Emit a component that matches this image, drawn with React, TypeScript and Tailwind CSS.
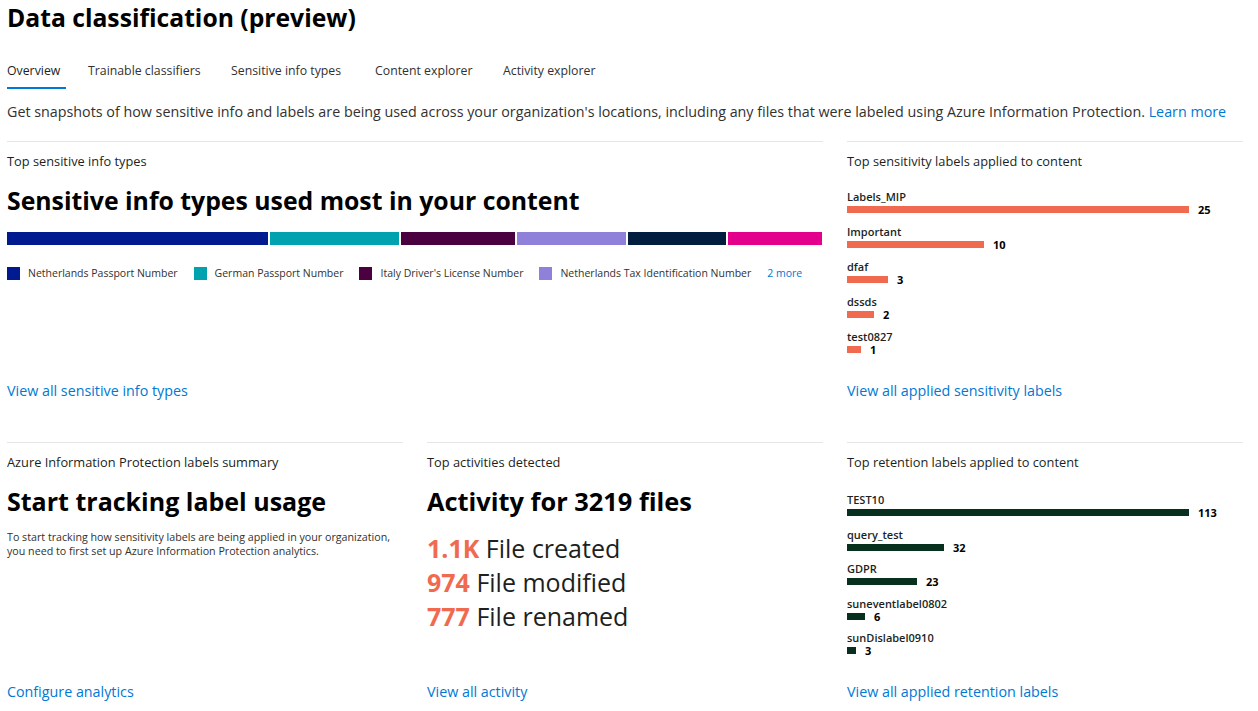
import React from 'react';

const segments = [
  { color: '#001a8f', width: 261 },
  { color: '#00a2b0', width: 129 },
  { color: '#4b003f', width: 114 },
  { color: '#8f80d9', width: 109 },
  { color: '#011e3f', width: 98 },
  { color: '#e3008c', width: 94 },
];

const legend = [
  { color: '#001a8f', label: 'Netherlands Passport Number' },
  { color: '#00a2b0', label: 'German Passport Number' },
  { color: '#4b003f', label: "Italy Driver's License Number" },
  { color: '#8f80d9', label: 'Netherlands Tax Identification Number' },
];

const sensitivityLabels = [
  { name: 'Labels_MIP', value: 25 },
  { name: 'Important', value: 10 },
  { name: 'dfaf', value: 3 },
  { name: 'dssds', value: 2 },
  { name: 'test0827', value: 1 },
];

const retentionLabels = [
  { name: 'TEST10', value: 113 },
  { name: 'query_test', value: 32 },
  { name: 'GDPR', value: 23 },
  { name: 'suneventlabel0802', value: 6 },
  { name: 'sunDislabel0910', value: 3 },
];

const tabs = [
  { label: 'Overview', w: 'w-[81px]' },
  { label: 'Trainable classifiers', w: 'w-[143px]' },
  { label: 'Sensitive info types', w: 'w-[144px]' },
  { label: 'Content explorer', w: 'w-[128px]' },
  { label: 'Activity explorer', w: 'w-[120px]' },
];

function BarList({ items, color, className }: { items: { name: string; value: number }[]; color: string; className: string }) {
  const max = Math.max(...items.map((i) => i.value));
  return (
    <div className={`flex flex-col ${className}`}>
      {items.map((item) => (
        <div key={item.name}>
          <div className="text-[11px] leading-[15px] font-semibold text-[#201f1e]">{item.name}</div>
          <div className="flex h-[11px] items-center">
            <div className="h-[7px]" style={{ width: Math.round((342 * item.value) / max), backgroundColor: color }} />
            <span className="ml-[9px] text-[11px] leading-[11px] font-bold text-black">{item.value}</span>
          </div>
        </div>
      ))}
    </div>
  );
}

function Section({ label, children, link, className = '' }: { label: string; children: React.ReactNode; link: string; className?: string }) {
  return (
    <section className={`flex flex-col border-t border-[#e6e6e6] pt-[10px] ${className}`}>
      <div className="text-[12.8px] leading-[18px] text-[#201f1e]">{label}</div>
      {children}
      <a className="mt-auto text-[14.3px] leading-[20px] text-[#0078d4] cursor-pointer">{link}</a>
    </section>
  );
}

export default function App() {
  return (
    <div className="w-[1258px] min-h-[711px] bg-white pl-[7px] pr-[15px] font-['Open_Sans',sans-serif] text-[#323130]">
      <h1 className="text-[24.7px] leading-[36px] font-bold text-black">Data classification (preview)</h1>

      <nav className="mt-[25px] flex">
        {tabs.map((t, i) => (
          <div key={t.label} className={`flex ${t.w}`}>
            <span
              className={`pb-[6px] text-[12.3px] leading-[20px] border-b-2 ${
                i === 0 ? 'w-[59px] border-[#0078d4] text-[#201f1e]' : 'border-transparent text-[#323130]'
              }`}
            >
              {t.label}
            </span>
          </div>
        ))}
      </nav>

      <p className="mt-[13px] text-[14.3px] leading-[20px]">
        Get snapshots of how sensitive info and labels are being used across your organization's locations, including any files that were labeled using Azure Information Protection.{' '}
        <a className="text-[#0078d4] cursor-pointer">Learn more</a>
      </p>

      <div className="mt-[19px] grid grid-cols-3 grid-rows-[301px_269px] gap-x-[24px]">
        <Section label="Top sensitive info types" link="View all sensitive info types" className="col-span-2 pb-[41px]">
          <h2 className="mt-[14px] text-[24.8px] leading-[32px] font-bold text-black">Sensitive info types used most in your content</h2>
          <div className="mt-[16px] flex h-[13px] gap-[2px]">
            {segments.map((s, i) => (
              <div key={i} className="h-full" style={{ width: s.width, backgroundColor: s.color }} />
            ))}
          </div>
          <div className="mt-[21px] flex items-center gap-[16px] whitespace-nowrap">
            {legend.map((l) => (
              <div key={l.label} className="flex shrink-0 items-center gap-[8px]">
                <span className="h-[13px] w-[13px] shrink-0" style={{ backgroundColor: l.color }} />
                <span className="text-[10.5px] leading-[14px] text-[#323130]">{l.label}</span>
              </div>
            ))}
            <a className="text-[10.5px] leading-[14px] text-[#0078d4] cursor-pointer">2 more</a>
          </div>
        </Section>

        <Section label="Top sensitivity labels applied to content" link="View all applied sensitivity labels" className="pb-[41px]">
          <BarList items={sensitivityLabels} color="#f06a50" className="mt-[19px] gap-[9px]" />
        </Section>

        <Section label="Azure Information Protection labels summary" link="Configure analytics" className="pb-[9px]">
          <h2 className="mt-[14px] text-[25px] leading-[32px] font-bold text-black">Start tracking label usage</h2>
          <p className="mt-[13px] text-[10.7px] leading-[14px] text-[#323130]">
            To start tracking how sensitivity labels are being applied in your organization, you need to first set up Azure Information Protection analytics.
          </p>
        </Section>

        <Section label="Top activities detected" link="View all activity" className="pb-[9px]">
          <h2 className="mt-[14px] text-[25.4px] leading-[32px] font-bold text-black">Activity for 3219 files</h2>
          <div className="mt-[14px] flex flex-col text-[25px] leading-[34px] text-[#201f1e]">
            <div><span className="font-bold text-[#f06a50]">1.1K</span> File created</div>
            <div><span className="font-bold text-[#f06a50]">974</span> File modified</div>
            <div><span className="font-bold text-[#f06a50]">777</span> File renamed</div>
          </div>
        </Section>

        <Section label="Top retention labels applied to content" link="View all applied retention labels" className="pb-[9px]">
          <BarList items={retentionLabels} color="#07301f" className="mt-[21px] gap-[8.5px]" />
        </Section>
      </div>
    </div>
  );
}
